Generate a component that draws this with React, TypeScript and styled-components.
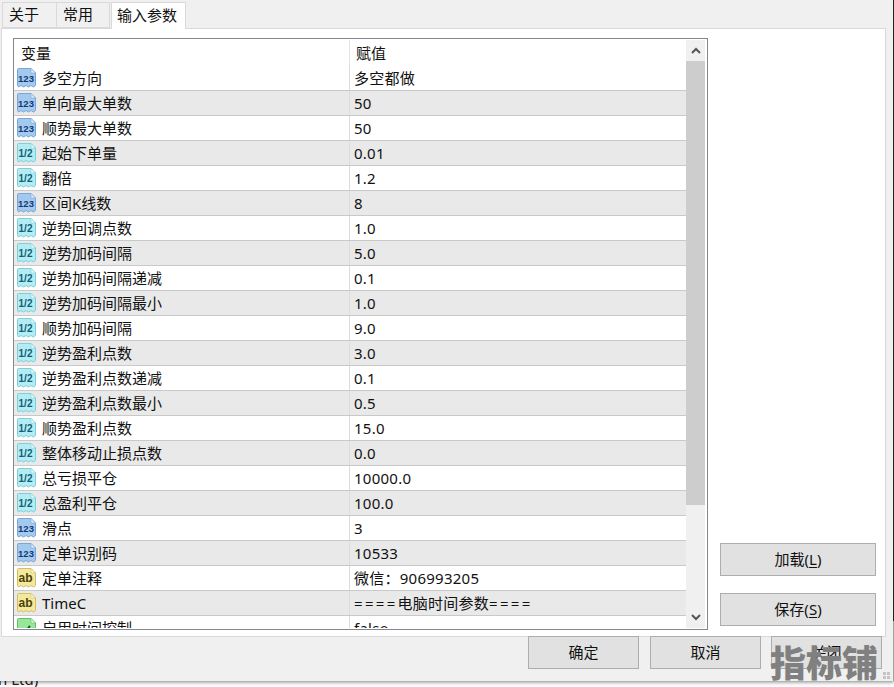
import React from "react";
import styled, { createGlobalStyle } from "styled-components";

const Global = createGlobalStyle`
  html, body { margin: 0; padding: 0; background: #fff; overflow: hidden; }
  #root { width: 894px; height: 687px; overflow: hidden; }
  * { box-sizing: border-box; }
`;

const FONT = `"Noto Sans", "Noto Sans CJK SC", sans-serif`;

const Page = styled.div`
  width: 894px;
  height: 687px;
  overflow: hidden;
  font-family: ${FONT};
  font-size: 15px;
  color: #111;
  background: #fff;
`;

const Dialog = styled.div`
  width: 894px;
  height: 681px;
  background: #f0f0f0;
  border-style: solid;
  border-width: 0 1px 0 0;
  border-image: linear-gradient(#222 0, #222 91%, #a0a0a0 91%, #a0a0a0 100%) 1;
  box-shadow: 0 1px 4px rgba(0, 0, 0, 0.5);
  padding: 2px 7px 0 1px;
  display: flex;
  flex-direction: column;
  position: relative;
`;

const TabStrip = styled.div`
  height: 26px;
  display: flex;
  padding-left: 1px;
`;

const Tab = styled.div<{ $active?: boolean; $w: number }>`
  width: ${(p) => p.$w}px;
  height: ${(p) => (p.$active ? 27 : 26)}px;
  margin-left: ${(p) => (p.$active ? 1 : 0)}px;
  background: ${(p) => (p.$active ? "#fff" : "#f0f0f0")};
  border: 1px solid #d9d9d9;
  border-left-width: ${(p) => (p.$active ? 1 : 0)}px;
  border-bottom-width: ${(p) => (p.$active ? 0 : 1)}px;
  display: flex;
  align-items: center;
  padding-left: ${(p) => (p.$active ? 5 : 6)}px;
  position: relative;
  z-index: ${(p) => (p.$active ? 1 : 0)};
  line-height: 1;
  padding-bottom: 2px;
  &:first-child { border-left-width: 1px; }
`;

const Panel = styled.div`
  height: 609px;
  background: #fff;
  border: 1px solid #d9d9d9;
  display: flex;
  padding: 9px 0 7px 11px;
`;

const ListBox = styled.div`
  width: 695px;
  height: 592px;
  border: 1px solid #828790;
  display: flex;
  padding: 1px 2px 1px 0;
  overflow: hidden;
  background: #fff;
`;

const Table = styled.div`
  width: 672px;
  overflow: hidden;
  display: flex;
  flex-direction: column;
`;

const HeaderRow = styled.div`
  flex: 0 0 26px;
  display: grid;
  grid-template-columns: 335px 1fr;
  align-items: center;
  line-height: 1;
`;

const HeaderCell = styled.div<{ $second?: boolean }>`
  padding-left: ${(p) => (p.$second ? 6 : 7)}px;
  height: 100%;
  display: flex;
  align-items: center;
  border-left: ${(p) => (p.$second ? "1px solid #e3e3e3" : "none")};
`;

const Row = styled.div<{ $even: boolean }>`
  flex: 0 0 25px;
  height: 25px;
  display: grid;
  grid-template-columns: 335px 1fr;
  background: ${(p) => (p.$even ? "#e9e9e9" : "#fff")};
  border-bottom: 1px solid #c9c9c9;
  line-height: 1;
`;

const NameCell = styled.div`
  display: flex;
  align-items: center;
  padding-left: 2px;
  gap: 5px;
  white-space: nowrap;
`;

const ValueCell = styled.div`
  display: flex;
  align-items: center;
  padding-left: 4px;
  letter-spacing: 0.25px;
  white-space: pre;
  border-left: 1px solid #dcdcdc;
`;

const EqualRun = styled.span`
  letter-spacing: 2.3px;
`;

const ScrollBar = styled.div`
  width: 19px;
  background: #f0f0f0;
  display: flex;
  flex-direction: column;
`;

const ScrollArrow = styled.div`
  flex: 0 0 21px;
  display: flex;
  align-items: center;
  justify-content: center;
`;

const ScrollThumb = styled.div`
  flex: 0 0 444px;
  background: #cdcdcd;
`;

const ScrollRest = styled.div`
  flex: 1;
`;

const SideColumn = styled.div`
  flex: 1;
  display: flex;
  flex-direction: column;
  gap: 17px;
  padding: 505px 9px 0 12px;
`;

const PanelButton = styled.div`
  height: 33px;
  background: #e1e1e1;
  border: 1px solid #adadad;
  display: flex;
  align-items: center;
  justify-content: center;
  line-height: 1;
  u { text-underline-offset: 2px; }
`;

const FooterBar = styled.div`
  display: flex;
  justify-content: flex-end;
  gap: 11px;
  margin-right: -7px;
  margin-top: -1px;
  padding-right: 11px;
`;

const FooterButton = styled(PanelButton)`
  width: 111px;
  &:last-child { margin-left: -1px; }
`;

const Watermark = styled.div`
  position: absolute;
  left: 770px;
  top: 639px;
  font-family: "Noto Sans CJK SC", sans-serif;
  font-weight: 900;
  font-size: 36px;
  line-height: 44px;
  color: #808080;
  white-space: nowrap;
`;

const Grip = styled.svg`
  position: absolute;
  right: 3px;
  bottom: 2px;
`;

const Behind = styled.div`
  height: 6px;
  overflow: hidden;
  font-size: 15px;
  line-height: 15px;
  margin-left: -2px;
  color: #222;
  & > span { display: block; margin-top: -9px; }
`;

type Kind = "int" | "dbl" | "str" | "bool";

const palette: Record<Kind, { fill: string; fold: string; edge: string; text: string }> = {
  int: { fill: "#a3c9ee", fold: "#e4eff9", edge: "#7ba6d6", text: "#0f3a78" },
  dbl: { fill: "#b3ecf2", fold: "#ecfbfd", edge: "#7fcfd9", text: "#0f5f78" },
  str: { fill: "#f4e89c", fold: "#fcf8d8", edge: "#d0bf68", text: "#4a3f08" },
  bool: { fill: "#98e69a", fold: "#e0f9e0", edge: "#62bf64", text: "#126012" },
};

const TypeIcon = ({ kind }: { kind: Kind }) => {
  const c = palette[kind];
  return (
    <svg width="21" height="22" viewBox="0 0 21 22" style={{ flex: "none" }}>
      <path
        d="M1.5 2.5 Q1.5 1.5 2.5 1.5 H15 L19.5 6 V18.5 L17.5 20 L15 18.5 L12.5 20 L10 18.5 L7.5 20 L5 18.5 L2.5 20 L1.5 18.5 Z"
        fill={c.fill}
        stroke={c.edge}
        strokeWidth="1"
      />
      <path d="M15 1.5 V6 H19.5 Z" fill={c.fold} stroke={c.edge} strokeWidth="0.6" />
      {kind === "int" && (
        <text x="10" y="14.5" textAnchor="middle" fontFamily="Liberation Sans" fontWeight="700" fontSize="9.5" fill={c.text}>
          123
        </text>
      )}
      {kind === "dbl" && (
        <text x="9.5" y="14.5" textAnchor="middle" fontFamily="Liberation Sans" fontWeight="700" fontSize="10" fill={c.text}>
          1/2
        </text>
      )}
      {kind === "str" && (
        <text x="9.5" y="15" textAnchor="middle" fontFamily="Liberation Sans" fontWeight="700" fontSize="12" fill={c.text}>
          ab
        </text>
      )}
      {kind === "bool" && <path d="M6 12 L9 15 L14 9" fill="none" stroke={c.text} strokeWidth="2" />}
    </svg>
  );
};

const rows: [Kind, string, React.ReactNode][] = [
  ["int", "多空方向", "多空都做"],
  ["int", "单向最大单数", "50"],
  ["int", "顺势最大单数", "50"],
  ["dbl", "起始下单量", "0.01"],
  ["dbl", "翻倍", "1.2"],
  ["int", "区间K线数", "8"],
  ["dbl", "逆势回调点数", "1.0"],
  ["dbl", "逆势加码间隔", "5.0"],
  ["dbl", "逆势加码间隔递减", "0.1"],
  ["dbl", "逆势加码间隔最小", "1.0"],
  ["dbl", "顺势加码间隔", "9.0"],
  ["dbl", "逆势盈利点数", "3.0"],
  ["dbl", "逆势盈利点数递减", "0.1"],
  ["dbl", "逆势盈利点数最小", "0.5"],
  ["dbl", "顺势盈利点数", "15.0"],
  ["dbl", "整体移动止损点数", "0.0"],
  ["dbl", "总亏损平仓", "10000.0"],
  ["dbl", "总盈利平仓", "100.0"],
  ["int", "滑点", "3"],
  ["int", "定单识别码", "10533"],
  ["str", "定单注释", "微信：906993205"],
  ["str", "TimeC", <span><EqualRun>====</EqualRun>电脑时间参数<EqualRun>====</EqualRun></span>],
  ["bool", "启用时间控制", "false"],
];

const Chevron = ({ up }: { up?: boolean }) => (
  <svg width="10" height="7" viewBox="0 0 10 7">
    <path d={up ? "M1 6 L5 2 L9 6" : "M1 1 L5 5 L9 1"} fill="none" stroke="#555" strokeWidth="2" />
  </svg>
);

export default function App() {
  return (
    <Page>
      <Global />
      <Dialog>
        <TabStrip>
          <Tab $w={55}>关于</Tab>
          <Tab $w={53}>常用</Tab>
          <Tab $w={75} $active>输入参数</Tab>
        </TabStrip>
        <Panel>
          <ListBox>
            <Table>
              <HeaderRow>
                <HeaderCell>变量</HeaderCell>
                <HeaderCell $second>赋值</HeaderCell>
              </HeaderRow>
              {rows.map(([kind, name, value], i) => (
                <Row key={name} $even={i % 2 === 1}>
                  <NameCell>
                    <TypeIcon kind={kind} />
                    {name}
                  </NameCell>
                  <ValueCell>{value}</ValueCell>
                </Row>
              ))}
            </Table>
            <ScrollBar>
              <ScrollArrow><Chevron up /></ScrollArrow>
              <ScrollThumb />
              <ScrollRest />
              <ScrollArrow><Chevron /></ScrollArrow>
            </ScrollBar>
          </ListBox>
          <SideColumn>
            <PanelButton>加载(<u>L</u>)</PanelButton>
            <PanelButton>保存(<u>S</u>)</PanelButton>
          </SideColumn>
        </Panel>
        <FooterBar>
          <FooterButton>确定</FooterButton>
          <FooterButton>取消</FooterButton>
          <FooterButton>关闭</FooterButton>
        </FooterBar>
        <Watermark>指标铺</Watermark>
        <Grip width="7" height="7" viewBox="0 0 7 7">
          <rect x="0" y="0" width="3" height="3" fill="#c4c4c4" />
          <rect x="4" y="0" width="3" height="3" fill="#c4c4c4" />
          <rect x="0" y="4" width="3" height="3" fill="#c4c4c4" />
          <rect x="4" y="4" width="3" height="3" fill="#c4c4c4" />
        </Grip>
      </Dialog>
      <Behind><span>n Ltd)</span></Behind>
    </Page>
  );
}
